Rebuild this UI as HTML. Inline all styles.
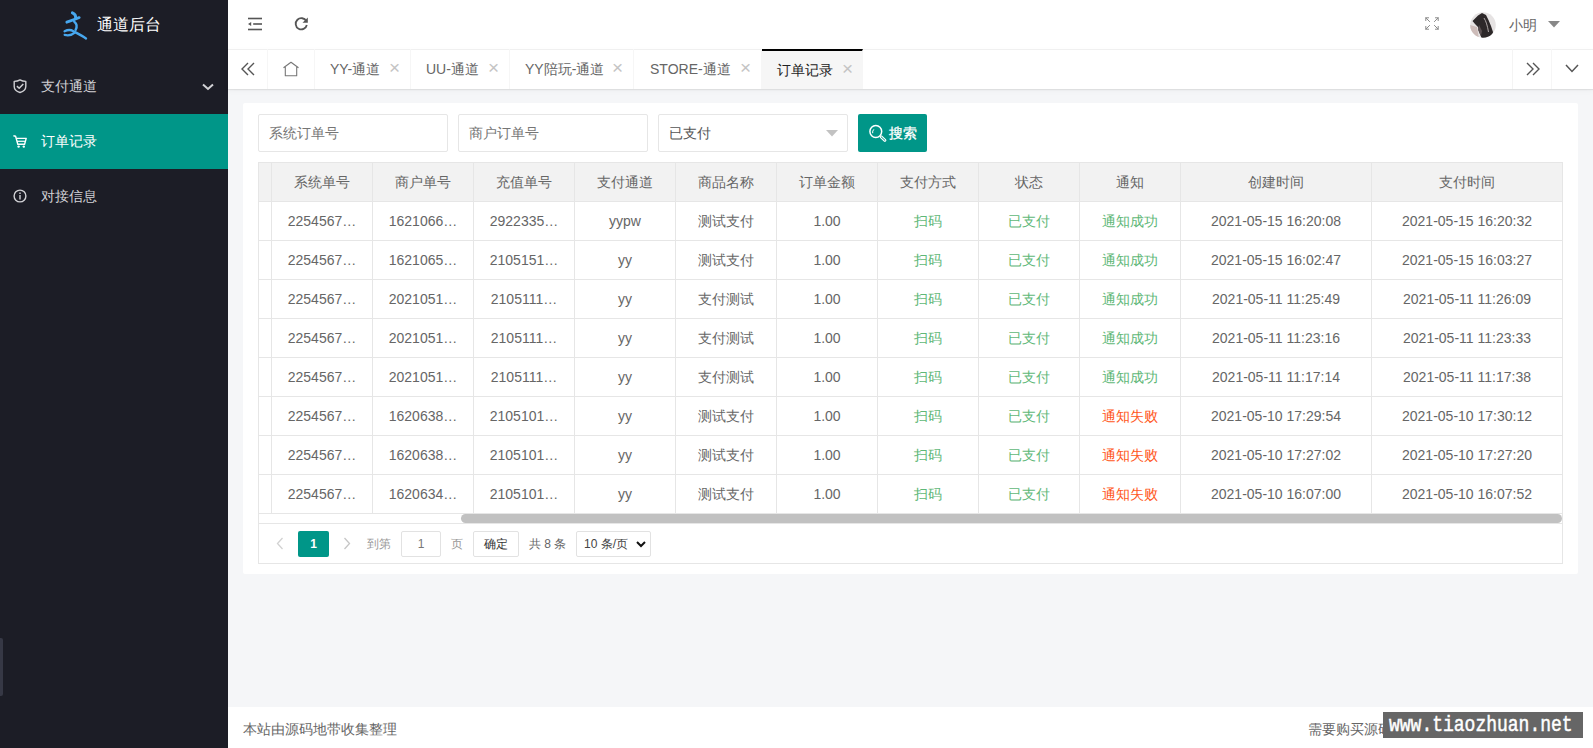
<!DOCTYPE html>
<html><head><meta charset="utf-8">
<style>
*{margin:0;padding:0;box-sizing:border-box}
html,body{width:1593px;height:748px;overflow:hidden}
body{font-family:"Liberation Sans",sans-serif;font-size:14px;color:#666;background:#f5f6f8;position:relative}
.abs{position:absolute}
svg{position:absolute;overflow:visible}
#side{left:0;top:0;width:228px;height:748px;background:#1c1d26}
#logo .t{position:absolute;left:97px;top:15px;font-size:16px;color:#fff;line-height:20px;white-space:nowrap}
.mi{position:absolute;left:0;width:228px;height:55px;line-height:55px;color:#d2d2d6;font-size:14px}
.mi .tx{position:absolute;left:41px;top:0}
.mi.on{background:#009688;color:#fff}
#strip{left:0;top:638px;width:3px;height:58px;background:#363845;border-radius:0 2px 2px 0}
#hdr{left:228px;top:0;width:1365px;height:50px;background:#fff;border-bottom:1px solid #f0f0f0}
#tabs{left:228px;top:49px;width:1365px;height:40px;background:#fff;border-top:1px solid #f0f0f0;box-shadow:0 1px 1px rgba(0,0,0,.07),0 2px 6px rgba(0,0,0,.035)}
.tb{position:absolute;top:-1px;height:40px;line-height:40px;border-right:1px solid #f6f6f6;color:#666;font-size:14px;white-space:nowrap}
.tb .tx{position:absolute;top:0}
.x{position:absolute;color:#c4c4c4;font-size:19px;top:-1px;font-weight:300}
.tb.on{background:#f6f6f6;border-top:2px solid #000;line-height:38px;color:#222}
#card{left:243px;top:103px;width:1335px;height:471px;background:#fff;border-radius:2px}
.inp{position:absolute;top:114px;height:38px;width:190px;border:1px solid #e6e6e6;background:#fff;border-radius:2px;line-height:36px;padding-left:10px;color:#757575;white-space:nowrap}
#btn{left:858px;top:114px;width:69px;height:38px;background:#009688;border-radius:2px;color:#fff;line-height:38px}
#tbl{left:258px;top:162px;width:1305px;height:402px;border:1px solid #e6e6e6;overflow:hidden;background:#fff}
.row{position:absolute;left:0;width:1303px;height:39px;border-bottom:1px solid #e6e6e6}
.row.h{background:#f2f2f2}
.c{position:absolute;top:0;height:38px;line-height:38px;text-align:center;border-right:1px solid #e6e6e6;white-space:nowrap;color:#666}
.g{color:#5fb878!important}.r{color:#ff5722!important}
#sb{left:202px;top:351px;width:1101px;height:9px;background:#c1c1c1;border-radius:5px}
#pg{left:0;top:360px;width:1303px;height:40px;border-top:1px solid #e6e6e6}
.pb{position:absolute;height:26px;line-height:24px;border:1px solid #e2e2e2;border-radius:2px;text-align:center;color:#333;font-size:12px;background:#fff}
#foot{left:228px;top:707px;width:1365px;height:41px;background:#fff}
#foot .tx{position:absolute;left:15px;top:14px;line-height:16px;color:#666;font-size:14px;white-space:nowrap}
#wm{left:1383px;top:712px;width:200px;height:26px;background:#666;color:#fff;font-family:"Liberation Mono",monospace;font-size:18px;line-height:26px;padding-left:6px;white-space:nowrap}
#wm span{display:inline-block;transform:scaleY(1.18);transform-origin:50% 55%;-webkit-text-stroke:0.4px #fff}
</style></head><body>
<div id="side" class="abs">
  <div id="logo" class="abs" style="left:0;top:0;width:228px;height:50px">
    <svg style="left:58px;top:6px" width="36" height="36" viewBox="0 0 36 36">
      <g fill="none" stroke="#47a7ee" stroke-linecap="round">
        <path d="M14.4 6.9 C16.6 7.8 18 9.8 17.6 12.6" stroke-width="3"/>
        <path d="M8.8 16.2 C12 15.2 17 13.6 21.2 11.6" stroke-width="2.8"/>
        <path d="M16.2 15.6 C18.6 17.6 19.4 20.6 17.6 23.8" stroke-width="2.4"/>
        <path d="M6.6 25.3 C9.2 24 12.6 23.6 15.4 25.2 C19 27.2 24 29.8 28 32.4" stroke-width="2.4"/>
        <path d="M6.6 28.9 C10 29.8 13.6 29.4 16.8 26.6" stroke-width="2.2"/>
      </g>
    </svg>
    <div class="t">通道后台</div>
  </div>
  <div class="mi" style="top:59px"><span class="tx">支付通道</span>
    <svg style="left:13px;top:20px" width="14" height="14" viewBox="0 0 14 14"><g fill="none" stroke="#cfcfd3" stroke-width="1.4" stroke-linejoin="round"><path d="M7 0.9 C8.8 2 10.8 2.4 12.8 2.4 V7.4 C12.8 10.4 10.2 12.4 7 13.5 C3.8 12.4 1.2 10.4 1.2 7.4 V2.4 C3.2 2.4 5.2 2 7 0.9 Z"/><path d="M3.9 7.1 L6.2 9.3 L10.3 5" stroke-width="1.5"/></g></svg>
    <svg style="left:202px;top:24px" width="12" height="8" viewBox="0 0 12 8"><path d="M1 1.5 L6 6 L11 1.5" fill="none" stroke="#d2d2d6" stroke-width="2"/></svg>
  </div>
  <div class="mi on" style="top:114px"><span class="tx">订单记录</span>
    <svg style="left:13px;top:21px" width="14" height="13" viewBox="0 0 14 13"><g fill="none" stroke="#fff" stroke-width="1.4" stroke-linejoin="round"><path d="M0.4 0.8 L2.6 1.2 L4.8 9.2 H11.6 L13.2 3.4 H3.4"/><path d="M4 6.3 H12.3" stroke-width="1.2"/></g><circle cx="5.6" cy="11.6" r="1.2" fill="#fff"/><circle cx="10.8" cy="11.6" r="1.2" fill="#fff"/></svg>
  </div>
  <div class="mi" style="top:169px"><span class="tx">对接信息</span>
    <svg style="left:13px;top:20px" width="14" height="14" viewBox="0 0 14 14"><circle cx="7" cy="7" r="5.9" fill="none" stroke="#d2d2d6" stroke-width="1.4"/><rect x="6.3" y="6" width="1.4" height="4.5" fill="#d2d2d6"/><rect x="6.3" y="3.5" width="1.4" height="1.5" fill="#d2d2d6"/></svg>
  </div>
  <div id="strip" class="abs"></div>
</div>

<div id="hdr" class="abs">
  <svg style="left:19px;top:17px" width="16" height="14" viewBox="0 0 16 14"><g fill="#555"><rect x="1" y="0.7" width="14" height="1.6"/><rect x="6.2" y="6.2" width="8.8" height="1.6"/><rect x="1" y="11.7" width="14" height="1.6"/><path d="M1 7 L4.2 5.1 V8.9 Z"/></g></svg>
  <svg style="left:66px;top:16px" width="15" height="15" viewBox="0 0 15 15"><path d="M12.3 5.2 A5.6 5.6 0 1 0 12.8 9" fill="none" stroke="#555" stroke-width="1.8"/><path d="M13.8 1.5 V6.8 H8.5 Z" fill="#555"/></svg>
  <svg style="left:1197px;top:17px" width="14" height="14" viewBox="0 0 14 14"><g fill="none" stroke="#8a8a8a" stroke-width="1" stroke-linecap="round"><path d="M0.8 3.6 L0.8 0.8 L3.6 0.8 M0.8 0.8 L4.6 4.6"/><path d="M10.4 0.8 H13.2 V3.6 M13.2 0.8 L9.4 4.6"/><path d="M0.8 9.4 V12.2 H3.6 M0.8 12.2 L4.6 8.4"/><path d="M13.2 9.4 V12.2 H10.4 M13.2 12.2 L9.4 8.4"/></g></svg>
  <svg style="left:1242px;top:12px" width="27" height="27" viewBox="0 0 27 27"><defs><clipPath id="av"><circle cx="13" cy="13" r="12.8"/></clipPath></defs><circle cx="13" cy="13" r="12.8" fill="#e6e3e3"/><g clip-path="url(#av)"><path d="M0 13 L7 15 L9 27 L0 27 Z" fill="#cdbcb9"/><path d="M2.5 9 L8 3.5 L12 1 L16 3 L18.5 8 L21 14 L23 20 L22 27 L12 27 L9.5 21 L8 15 L5 12 Z" fill="#2d2829"/><path d="M9 13 L12 19 L11 24 L8 18 Z" fill="#5b5052"/><path d="M14 6 C16 9 17.5 14 18.5 20" fill="none" stroke="#bdb5b5" stroke-width="0.9"/></g></svg>
  <div class="abs" style="left:1281px;top:15px;line-height:20px;color:#666;white-space:nowrap">小明</div>
  <svg style="left:1320px;top:21px" width="12" height="7" viewBox="0 0 12 7"><path d="M0 0 H12 L6 6.5 Z" fill="#888"/></svg>
</div>

<div id="tabs" class="abs">
  <div class="tb" style="left:0;width:40px">
    <svg style="left:12px;top:13px" width="16" height="14" viewBox="0 0 16 14"><g fill="none" stroke="#555" stroke-width="1.4"><path d="M8 1 L2 7 L8 13"/><path d="M14 1 L8 7 L14 13"/></g></svg>
  </div>
  <div class="tb" style="left:40px;width:47px">
    <svg style="left:15px;top:11px" width="17" height="17" viewBox="0 0 17 16"><path d="M0.5 7.3 L8 1.8 L15.5 7.3 M2.3 6 V15.2 H13.7 V6" fill="none" stroke="#777" stroke-width="1.1" stroke-linejoin="round"/></svg>
  </div>
  <div class="tb" style="left:87px;width:96px"><span class="tx" style="left:15px">YY-通道</span><span class="x" style="left:74px">×</span></div>
  <div class="tb" style="left:183px;width:99px"><span class="tx" style="left:15px">UU-通道</span><span class="x" style="left:77px">×</span></div>
  <div class="tb" style="left:282px;width:124px"><span class="tx" style="left:15px">YY陪玩-通道</span><span class="x" style="left:102px">×</span></div>
  <div class="tb" style="left:406px;width:128px"><span class="tx" style="left:16px">STORE-通道</span><span class="x" style="left:106px">×</span></div>
  <div class="tb on" style="left:534px;width:101px"><span class="tx" style="left:15px">订单记录</span><span class="x" style="left:80px">×</span></div>
  <div class="tb" style="left:1284px;width:40px;border-left:1px solid #f4f4f4">
    <svg style="left:12px;top:13px" width="16" height="14" viewBox="0 0 16 14"><g fill="none" stroke="#555" stroke-width="1.4"><path d="M2 1 L8 7 L2 13"/><path d="M8 1 L14 7 L8 13"/></g></svg>
  </div>
  <div class="tb" style="left:1324px;width:41px;border-right:0">
    <svg style="left:13px;top:15px" width="14" height="9" viewBox="0 0 14 9"><path d="M1 1 L7 7.5 L13 1" fill="none" stroke="#555" stroke-width="1.5"/></svg>
  </div>
</div>

<div id="card" class="abs"></div>
<div class="inp" style="left:258px">系统订单号</div>
<div class="inp" style="left:458px">商户订单号</div>
<div class="inp" style="left:658px;color:#555">已支付
  <svg style="left:167px;top:15px" width="12" height="7" viewBox="0 0 12 7"><path d="M0 0 H12 L6 6.5 Z" fill="#c2c2c2"/></svg>
</div>
<div id="btn" class="abs">
  <svg style="left:11px;top:11px" width="18" height="18" viewBox="0 0 18 18"><g fill="none" stroke-linecap="round"><circle cx="6.8" cy="6.5" r="5.9" stroke="#fff" stroke-width="1.5"/><path d="M12.2 11.9 L15.9 15.3" stroke="#fff" stroke-width="3"/><path d="M12.2 11.9 L15.9 15.3" stroke="#009688" stroke-width="1"/><path d="M3.6 7.8 A3.4 3.4 0 0 1 4.6 4.6" stroke="#fff" stroke-width="1"/></g></svg>
  <span class="abs" style="left:31px;top:0;white-space:nowrap;-webkit-text-stroke:0.3px #fff">搜索</span>
</div>

<div id="tbl" class="abs">
<div class="row h" style="top:0"><div class="c" style="left:0;width:13px"></div><div class="c" style="left:13px;width:101px">系统单号</div><div class="c" style="left:114px;width:101px">商户单号</div><div class="c" style="left:215px;width:101px">充值单号</div><div class="c" style="left:316px;width:101px">支付通道</div><div class="c" style="left:417px;width:101px">商品名称</div><div class="c" style="left:518px;width:101px">订单金额</div><div class="c" style="left:619px;width:101px">支付方式</div><div class="c" style="left:720px;width:101px">状态</div><div class="c" style="left:821px;width:101px">通知</div><div class="c" style="left:922px;width:191px">创建时间</div><div class="c" style="left:1113px;width:191px">支付时间</div></div>
<div class="row" style="top:39px"><div class="c" style="left:0;width:13px"></div><div class="c" style="left:13px;width:101px">2254567…</div><div class="c" style="left:114px;width:101px">1621066…</div><div class="c" style="left:215px;width:101px">2922335…</div><div class="c" style="left:316px;width:101px">yypw</div><div class="c" style="left:417px;width:101px">测试支付</div><div class="c" style="left:518px;width:101px">1.00</div><div class="c g" style="left:619px;width:101px">扫码</div><div class="c g" style="left:720px;width:101px">已支付</div><div class="c g" style="left:821px;width:101px">通知成功</div><div class="c" style="left:922px;width:191px">2021-05-15 16:20:08</div><div class="c" style="left:1113px;width:191px">2021-05-15 16:20:32</div></div>
<div class="row" style="top:78px"><div class="c" style="left:0;width:13px"></div><div class="c" style="left:13px;width:101px">2254567…</div><div class="c" style="left:114px;width:101px">1621065…</div><div class="c" style="left:215px;width:101px">2105151…</div><div class="c" style="left:316px;width:101px">yy</div><div class="c" style="left:417px;width:101px">测试支付</div><div class="c" style="left:518px;width:101px">1.00</div><div class="c g" style="left:619px;width:101px">扫码</div><div class="c g" style="left:720px;width:101px">已支付</div><div class="c g" style="left:821px;width:101px">通知成功</div><div class="c" style="left:922px;width:191px">2021-05-15 16:02:47</div><div class="c" style="left:1113px;width:191px">2021-05-15 16:03:27</div></div>
<div class="row" style="top:117px"><div class="c" style="left:0;width:13px"></div><div class="c" style="left:13px;width:101px">2254567…</div><div class="c" style="left:114px;width:101px">2021051…</div><div class="c" style="left:215px;width:101px">2105111…</div><div class="c" style="left:316px;width:101px">yy</div><div class="c" style="left:417px;width:101px">支付测试</div><div class="c" style="left:518px;width:101px">1.00</div><div class="c g" style="left:619px;width:101px">扫码</div><div class="c g" style="left:720px;width:101px">已支付</div><div class="c g" style="left:821px;width:101px">通知成功</div><div class="c" style="left:922px;width:191px">2021-05-11 11:25:49</div><div class="c" style="left:1113px;width:191px">2021-05-11 11:26:09</div></div>
<div class="row" style="top:156px"><div class="c" style="left:0;width:13px"></div><div class="c" style="left:13px;width:101px">2254567…</div><div class="c" style="left:114px;width:101px">2021051…</div><div class="c" style="left:215px;width:101px">2105111…</div><div class="c" style="left:316px;width:101px">yy</div><div class="c" style="left:417px;width:101px">支付测试</div><div class="c" style="left:518px;width:101px">1.00</div><div class="c g" style="left:619px;width:101px">扫码</div><div class="c g" style="left:720px;width:101px">已支付</div><div class="c g" style="left:821px;width:101px">通知成功</div><div class="c" style="left:922px;width:191px">2021-05-11 11:23:16</div><div class="c" style="left:1113px;width:191px">2021-05-11 11:23:33</div></div>
<div class="row" style="top:195px"><div class="c" style="left:0;width:13px"></div><div class="c" style="left:13px;width:101px">2254567…</div><div class="c" style="left:114px;width:101px">2021051…</div><div class="c" style="left:215px;width:101px">2105111…</div><div class="c" style="left:316px;width:101px">yy</div><div class="c" style="left:417px;width:101px">支付测试</div><div class="c" style="left:518px;width:101px">1.00</div><div class="c g" style="left:619px;width:101px">扫码</div><div class="c g" style="left:720px;width:101px">已支付</div><div class="c g" style="left:821px;width:101px">通知成功</div><div class="c" style="left:922px;width:191px">2021-05-11 11:17:14</div><div class="c" style="left:1113px;width:191px">2021-05-11 11:17:38</div></div>
<div class="row" style="top:234px"><div class="c" style="left:0;width:13px"></div><div class="c" style="left:13px;width:101px">2254567…</div><div class="c" style="left:114px;width:101px">1620638…</div><div class="c" style="left:215px;width:101px">2105101…</div><div class="c" style="left:316px;width:101px">yy</div><div class="c" style="left:417px;width:101px">测试支付</div><div class="c" style="left:518px;width:101px">1.00</div><div class="c g" style="left:619px;width:101px">扫码</div><div class="c g" style="left:720px;width:101px">已支付</div><div class="c r" style="left:821px;width:101px">通知失败</div><div class="c" style="left:922px;width:191px">2021-05-10 17:29:54</div><div class="c" style="left:1113px;width:191px">2021-05-10 17:30:12</div></div>
<div class="row" style="top:273px"><div class="c" style="left:0;width:13px"></div><div class="c" style="left:13px;width:101px">2254567…</div><div class="c" style="left:114px;width:101px">1620638…</div><div class="c" style="left:215px;width:101px">2105101…</div><div class="c" style="left:316px;width:101px">yy</div><div class="c" style="left:417px;width:101px">测试支付</div><div class="c" style="left:518px;width:101px">1.00</div><div class="c g" style="left:619px;width:101px">扫码</div><div class="c g" style="left:720px;width:101px">已支付</div><div class="c r" style="left:821px;width:101px">通知失败</div><div class="c" style="left:922px;width:191px">2021-05-10 17:27:02</div><div class="c" style="left:1113px;width:191px">2021-05-10 17:27:20</div></div>
<div class="row" style="top:312px"><div class="c" style="left:0;width:13px"></div><div class="c" style="left:13px;width:101px">2254567…</div><div class="c" style="left:114px;width:101px">1620634…</div><div class="c" style="left:215px;width:101px">2105101…</div><div class="c" style="left:316px;width:101px">yy</div><div class="c" style="left:417px;width:101px">测试支付</div><div class="c" style="left:518px;width:101px">1.00</div><div class="c g" style="left:619px;width:101px">扫码</div><div class="c g" style="left:720px;width:101px">已支付</div><div class="c r" style="left:821px;width:101px">通知失败</div><div class="c" style="left:922px;width:191px">2021-05-10 16:07:00</div><div class="c" style="left:1113px;width:191px">2021-05-10 16:07:52</div></div>
  <div id="sb" class="abs"></div>
  <div id="pg" class="abs">
    <svg style="left:17px;top:13px" width="8" height="13" viewBox="0 0 8 13"><path d="M6.5 1 L1.5 6.5 L6.5 12" fill="none" stroke="#d2d2d2" stroke-width="1.3"/></svg>
    <div class="pb" style="left:39px;top:7px;width:31px;height:26px;line-height:26px;background:#009688;border:0;color:#fff;font-weight:bold;font-size:12px">1</div>
    <svg style="left:84px;top:13px" width="8" height="13" viewBox="0 0 8 13"><path d="M1.5 1 L6.5 6.5 L1.5 12" fill="none" stroke="#c6c6c6" stroke-width="1.3"/></svg>
    <span class="abs" style="left:108px;top:12px;line-height:16px;color:#999;font-size:12px;white-space:nowrap">到第</span>
    <div class="pb" style="left:142px;top:7px;width:40px;color:#777">1</div>
    <span class="abs" style="left:192px;top:12px;line-height:16px;color:#999;font-size:12px">页</span>
    <div class="pb" style="left:214px;top:7px;width:46px;color:#333">确定</div>
    <span class="abs" style="left:270px;top:12px;line-height:16px;color:#666;font-size:12px;white-space:nowrap">共 8 条</span>
    <div class="pb" style="left:317px;top:7px;width:75px;text-align:left;padding-left:7px;color:#444;font-size:12px">10 条/页
      <svg style="left:59px;top:9px" width="10" height="7" viewBox="0 0 10 7"><path d="M1 1 L5 5 L9 1" fill="none" stroke="#111" stroke-width="2"/></svg>
    </div>
  </div>
</div>

<div id="foot" class="abs"><span class="tx">本站由源码地带收集整理</span>
  <span class="abs" style="left:1080px;top:14px;line-height:16px;white-space:nowrap">需要购买源码</span>
</div>
<div id="wm" class="abs"><span>www.tiaozhuan.net</span></div>
</body></html>
